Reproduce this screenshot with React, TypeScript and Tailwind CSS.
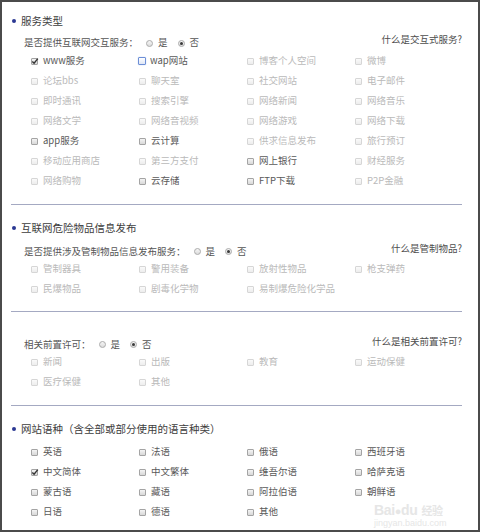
import React from 'react';

type Item = { label: string; on?: boolean; checked?: boolean; focus?: boolean };

const d = (label: string): Item => ({ label });
const e = (label: string, extra: Partial<Item> = {}): Item => ({ label, on: true, ...extra });

const serviceItems: Item[] = [
  e('www服务', { checked: true }), e('wap网站', { focus: true }), d('博客个人空间'), d('微博'),
  d('论坛bbs'), d('聊天室'), d('社交网站'), d('电子邮件'),
  d('即时通讯'), d('搜索引擎'), d('网络新闻'), d('网络音乐'),
  d('网络文学'), d('网络音视频'), d('网络游戏'), d('网络下载'),
  e('app服务'), e('云计算'), d('供求信息发布'), d('旅行预订'),
  d('移动应用商店'), d('第三方支付'), e('网上银行'), d('财经服务'),
  d('网络购物'), e('云存储'), e('FTP下载'), d('P2P金融'),
];

const dangerItems: Item[] = [
  d('管制器具'), d('警用装备'), d('放射性物品'), d('枪支弹药'),
  d('民爆物品'), d('剧毒化学物'), d('易制爆危险化学品'),
];

const permitItems: Item[] = [d('新闻'), d('出版'), d('教育'), d('运动保健'), d('医疗保健'), d('其他')];

const langItems: Item[] = [
  e('英语'), e('法语'), e('俄语'), e('西班牙语'),
  e('中文简体', { checked: true }), e('中文繁体'), e('维吾尔语'), e('哈萨克语'),
  e('蒙古语'), e('藏语'), e('阿拉伯语'), e('朝鲜语'),
  e('日语'), e('德语'), e('其他'),
];

const Box: React.FC<{ item: Item }> = ({ item }) => {
  if (item.focus) {
    return <span className="w-[8px] h-[8px] -ml-px mr-[-1px] border border-[#6d8fd6] bg-gradient-to-b from-white to-[#dfe6f5] rounded-[1px] shadow-[0_0_1px_#8fb0ee]" />;
  }
  return (
    <span
      className={
        item.on
          ? 'relative w-[7px] h-[7px] border border-[#a4a4a4] bg-gradient-to-b from-[#f4f4f4] to-[#d8d8d8] rounded-[1px]'
          : 'relative w-[7px] h-[7px] border border-[#d6d6d6] bg-gradient-to-b from-[#fafafa] to-[#ededed] rounded-[1px]'
      }
    >
      {item.checked && (
        <svg viewBox="0 0 8 8" className="absolute -left-px -top-[2px] w-[8px] h-[8px]">
          <path d="M1.3 4.4 L3.1 6.2 L6.8 1.6" fill="none" stroke="#333" strokeWidth="1.4" />
        </svg>
      )}
    </span>
  );
};

const Grid: React.FC<{ items: Item[] }> = ({ items }) => (
  <div className="ml-[20px] grid grid-cols-[108px_108px_108px_108px]">
    {items.map((it) => (
      <div key={it.label} className="h-5 flex items-center gap-[5px]">
        <Box item={it} />
        <span className={it.on ? 'text-[#595959]' : 'text-[#bababa]'}>{it.label}</span>
      </div>
    ))}
  </div>
);

const Radio: React.FC<{ checked?: boolean }> = ({ checked }) => (
  <span className="w-[7px] h-[7px] rounded-full border border-[#ababab] bg-gradient-to-b from-[#f6f6f6] to-[#dcdcdc] flex items-center justify-center">
    {checked && <span className="w-[3px] h-[3px] rounded-full bg-[#3a3a3a]" />}
  </span>
);

const Question: React.FC<{ text: string; link: string; className: string }> = ({ text, link, className }) => (
  <div className={`flex items-center justify-between ${className}`}>
    <div className="ml-[13px] flex items-center text-[#555]">
      <span>{text}</span>
      <span className="ml-2"><Radio /></span>
      <span className="ml-[5px]">是</span>
      <span className="ml-[10px]"><Radio checked /></span>
      <span className="ml-[5px]">否</span>
    </div>
    <span className="mb-[6px] text-[#4d4d4d]">{link}</span>
  </div>
);

const Title: React.FC<{ text: string }> = ({ text }) => (
  <div className="h-5 flex items-center text-[10.5px] text-[#3d3d3d]">
    <span className="ml-px w-[4px] h-[4px] rounded-full bg-[#2b3893]" />
    <span className="ml-[5px]">{text}</span>
  </div>
);

const Divider = () => <div className="h-px bg-[#a4a9c2]" />;

export default function App() {
  return (
    <div
      className="relative w-[480px] h-[532px] overflow-hidden bg-white border-2 border-[#4b4b4b] text-[9.5px] leading-none"
      style={{ fontFamily: '"Noto Sans CJK SC", "Noto Sans", sans-serif' }}
    >
      <div className="pl-[9px] pr-[16px]">
        <div className="pt-[9px] pb-[13px]">
          <Title text="服务类型" />
          <Question className="mt-1 h-4" text="是否提供互联网交互服务：" link="什么是交互式服务?" />
          <Grid items={serviceItems} />
        </div>
        <Divider />
        <div className="pt-[13px] pb-[12px]">
          <Title text="互联网危险物品信息发布" />
          <Question className="mt-[6px] h-[15px]" text="是否提供涉及管制物品信息发布服务：" link="什么是管制物品?" />
          <Grid items={dangerItems} />
        </div>
        <Divider />
        <div className="pt-[25px] pb-[13px]">
          <Question className="h-[15px]" text="相关前置许可：" link="什么是相关前置许可?" />
          <Grid items={permitItems} />
        </div>
        <Divider />
        <div className="pt-[13px]">
          <Title text="网站语种（含全部或部分使用的语言种类）" />
          <div className="mt-[3px]">
            <Grid items={langItems} />
          </div>
        </div>
      </div>
      <div className="absolute left-[372px] top-[501px] flex flex-col items-start text-[#e6e6e6] pointer-events-none">
        <span className="text-[14px] font-bold tracking-tight leading-none" style={{ fontFamily: '"Liberation Sans", sans-serif' }}>
          Bai<span className="text-[11px]">●</span>du<span className="ml-1 text-[11px]" style={{ fontFamily: '"Noto Sans CJK SC", sans-serif' }}>经验</span>
        </span>
        <span className="mt-[2px] text-[9px] leading-none" style={{ fontFamily: '"Liberation Sans", sans-serif' }}>jingyan.baidu.com</span>
      </div>
    </div>
  );
}
